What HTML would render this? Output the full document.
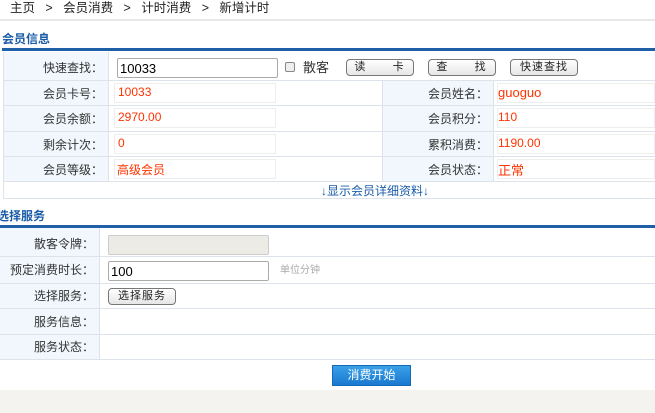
<!DOCTYPE html>
<html><head><meta charset="utf-8"><style>
*{margin:0;padding:0;box-sizing:border-box}
body{width:655px;height:413px;overflow:hidden;background:#fff;font-family:"Liberation Sans","Noto Sans CJK SC",sans-serif;font-size:12px;color:#333;position:relative}
.a{position:absolute}
.lab{position:absolute;text-align:right;color:#333;font-size:12px}
.val{position:absolute;color:#f30;font-size:12px}
.box{position:absolute;border:1px solid #eee;height:20px}
.btn{position:absolute;border:1px solid #777;border-radius:4px;background:linear-gradient(#fff,#e6e6e6);font-size:11px;text-align:center;line-height:15px;height:17px;color:#222;letter-spacing:2px}
.hl{position:absolute;height:1px;background:#dde3ea}
.vl{position:absolute;width:1px;background:#dde3ea}
.lc{position:absolute;background:#f1f7fd}
</style></head><body>
<div class="a" style="left:10px;top:-3px;font-size:12.5px;color:#222">主页&nbsp;&nbsp;&nbsp;&gt;&nbsp;&nbsp;&nbsp;会员消费&nbsp;&nbsp;&nbsp;&gt;&nbsp;&nbsp;&nbsp;计时消费&nbsp;&nbsp;&nbsp;&gt;&nbsp;&nbsp;&nbsp;新增计时</div>
<div class="a" style="left:0;top:19px;width:655px;height:2px;background:#e8e8e8"></div>
<div class="a" style="left:2px;top:30px;font-weight:bold;color:#1a5ca8;font-size:12px">会员信息</div>
<div class="a" style="left:2px;top:48px;width:653px;height:3px;background:#1f5fa8"></div>
<div class="lc" style="left:3px;top:52px;width:105px;height:129px"></div>
<div class="lc" style="left:382px;top:80px;width:111px;height:101px"></div>
<div class="vl" style="left:3px;top:52px;height:146px"></div>
<div class="vl" style="left:108px;top:52px;height:129px"></div>
<div class="vl" style="left:382px;top:80px;height:101px"></div>
<div class="vl" style="left:493px;top:80px;height:101px"></div>
<div class="hl" style="left:3px;top:80px;width:652px"></div>
<div class="hl" style="left:3px;top:105px;width:652px"></div>
<div class="hl" style="left:3px;top:131px;width:652px"></div>
<div class="hl" style="left:3px;top:156px;width:652px"></div>
<div class="hl" style="left:3px;top:181px;width:652px"></div>
<div class="hl" style="left:3px;top:198px;width:652px"></div>
<div class="lab" style="left:3px;top:59px;width:100px">快速查找：</div>
<div class="a" style="left:117px;top:58px;width:161px;height:20px;border:1px solid #aaa;border-radius:2px;padding:2px 2px;font-size:13px;color:#000">10033</div>
<div class="a" style="left:285px;top:62px;width:10px;height:10px;border:1px solid #888;border-radius:2px;background:#eee"></div>
<div class="a" style="left:303px;top:57px;font-size:13px">散客</div>
<div class="btn" style="left:346px;top:59px;width:68px">读&nbsp;&nbsp;&nbsp;&nbsp;&nbsp;卡</div>
<div class="btn" style="left:428px;top:59px;width:68px">查&nbsp;&nbsp;&nbsp;&nbsp;&nbsp;找</div>
<div class="btn" style="left:510px;top:59px;width:68px;letter-spacing:1px">快速查找</div>

<div class="lab" style="left:3px;top:85px;width:100px">会员卡号：</div>
<div class="box" style="left:114px;top:83px;width:162px"></div><div class="val" style="left:118px;top:85px">10033</div>
<div class="lab" style="left:382px;top:85px;width:106px">会员姓名：</div>
<div class="box" style="left:497px;top:83px;width:158px"></div><div class="val" style="left:498px;top:85px;font-size:13px">guoguo</div>

<div class="lab" style="left:3px;top:110px;width:100px">会员余额：</div>
<div class="box" style="left:114px;top:108px;width:162px"></div><div class="val" style="left:118px;top:110px">2970.00</div>
<div class="lab" style="left:382px;top:110px;width:106px">会员积分：</div>
<div class="box" style="left:497px;top:108px;width:158px"></div><div class="val" style="left:498px;top:110px">110</div>

<div class="lab" style="left:3px;top:136px;width:100px">剩余计次：</div>
<div class="box" style="left:114px;top:134px;width:162px"></div><div class="val" style="left:118px;top:136px">0</div>
<div class="lab" style="left:382px;top:136px;width:106px">累积消费：</div>
<div class="box" style="left:497px;top:134px;width:158px"></div><div class="val" style="left:498px;top:136px">1190.00</div>

<div class="lab" style="left:3px;top:161px;width:100px">会员等级：</div>
<div class="box" style="left:114px;top:159px;width:162px"></div><div class="val" style="left:117px;top:161px">高级会员</div>
<div class="lab" style="left:382px;top:161px;width:106px">会员状态：</div>
<div class="box" style="left:497px;top:159px;width:158px"></div><div class="val" style="left:498px;top:160px;font-size:13px">正常</div>

<div class="a" style="left:321px;top:182px;color:#1a5ca8;font-size:12px">↓显示会员详细资料↓</div>

<div class="a" style="left:-3px;top:207px;font-weight:bold;color:#1a5ca8;font-size:12px">选择服务</div>
<div class="a" style="left:0;top:225px;width:655px;height:3px;background:#1f5fa8"></div>
<div class="lc" style="left:0;top:228px;width:99px;height:131px"></div>
<div class="vl" style="left:99px;top:228px;height:131px"></div>
<div class="hl" style="left:0;top:256px;width:655px"></div>
<div class="hl" style="left:0;top:283px;width:655px"></div>
<div class="hl" style="left:0;top:308px;width:655px"></div>
<div class="hl" style="left:0;top:334px;width:655px"></div>
<div class="hl" style="left:0;top:359px;width:655px"></div>
<div class="lab" style="left:0;top:235px;width:94px">散客令牌：</div>
<div class="a" style="left:108px;top:235px;width:161px;height:20px;border:1px solid #ccc;border-radius:2px;background:#ecebe6"></div>
<div class="lab" style="left:0;top:261px;width:94px">预定消费时长：</div>
<div class="a" style="left:108px;top:261px;width:161px;height:20px;border:1px solid #aaa;border-radius:2px;padding:2px 2px;font-size:13px;color:#000">100</div>
<div class="a" style="left:280px;top:261px;color:#aaa;font-size:10px">单位分钟</div>
<div class="lab" style="left:0;top:287px;width:94px">选择服务：</div>
<div class="btn" style="left:108px;top:288px;width:68px;letter-spacing:1px">选择服务</div>
<div class="lab" style="left:0;top:313px;width:94px">服务信息：</div>
<div class="lab" style="left:0;top:338px;width:94px">服务状态：</div>
<div class="a" style="left:332px;top:365px;width:79px;height:21px;background:linear-gradient(#3aa0e8,#1a78d0);border:1px solid #1669b8;color:#fff;text-align:center;line-height:19px;font-size:12px">消费开始</div>
<div class="a" style="left:0;top:390px;width:655px;height:23px;background:#f4f3ef"></div>
</body></html>
